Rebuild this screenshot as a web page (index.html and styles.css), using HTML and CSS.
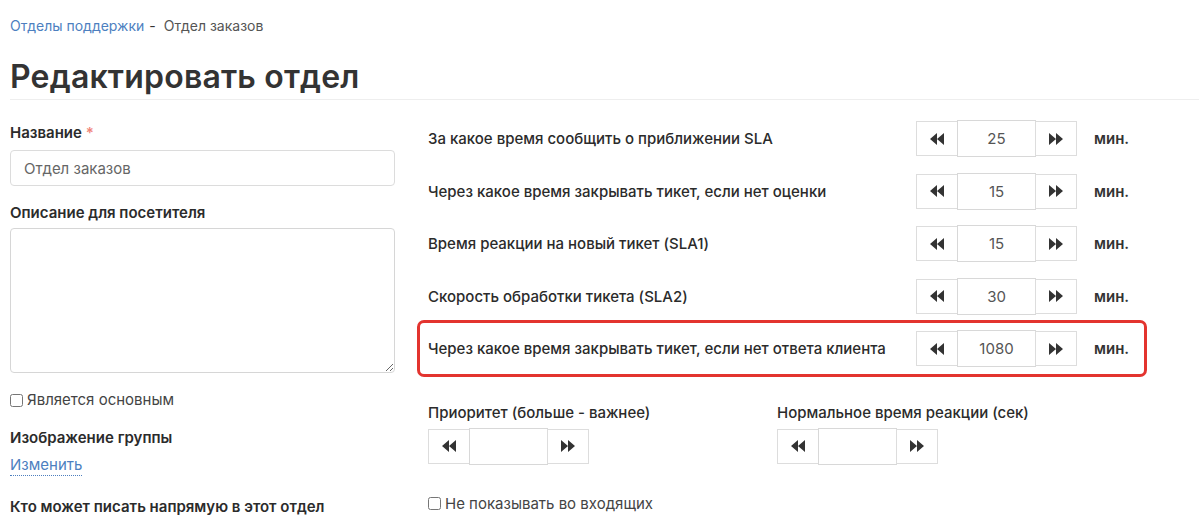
FILE: index.html
```html
<!doctype html>
<html>
<head>
<meta charset="utf-8">
<title>Редактировать отдел</title>
<link rel="stylesheet" href="styles.css">
</head>
<body>
<div class="crumbs"><a href="#">Отделы поддержки</a><span class="sep">-</span><span class="cur">Отдел заказов</span></div>
<h1 class="title">Редактировать отдел</h1>

<div class="form">
  <div class="left">
    <label class="lbl">Название <span class="req">*</span></label>
    <input class="text" value="Отдел заказов">
    <label class="lbl">Описание для посетителя</label>
    <textarea class="area"></textarea>
    <label class="check"><input type="checkbox"> Является основным</label>
    <div class="lbl">Изображение группы</div>
    <a href="#" class="dotted">Изменить</a>
    <div class="lbl">Кто может писать напрямую в этот отдел</div>
  </div>

  <div class="right">
    <div class="row">
      <div class="rlabel">За какое время сообщить о приближении SLA</div>
      <div class="stepper">
        <button class="sbtn"><svg viewBox="0 0 14 12"><path d="M7 0 0 6 7 12ZM14 0 7 6 14 12Z"/></svg></button>
        <input class="sval" value="25">
        <button class="sbtn"><svg viewBox="0 0 14 12"><path d="M0 0 7 6 0 12ZM7 0 14 6 7 12Z"/></svg></button>
      </div>
      <div class="unit">мин.</div>
    </div>
    <div class="row">
      <div class="rlabel">Через какое время закрывать тикет, если нет оценки</div>
      <div class="stepper">
        <button class="sbtn"><svg viewBox="0 0 14 12"><path d="M7 0 0 6 7 12ZM14 0 7 6 14 12Z"/></svg></button>
        <input class="sval" value="15">
        <button class="sbtn"><svg viewBox="0 0 14 12"><path d="M0 0 7 6 0 12ZM7 0 14 6 7 12Z"/></svg></button>
      </div>
      <div class="unit">мин.</div>
    </div>
    <div class="row">
      <div class="rlabel">Время реакции на новый тикет (SLA1)</div>
      <div class="stepper">
        <button class="sbtn"><svg viewBox="0 0 14 12"><path d="M7 0 0 6 7 12ZM14 0 7 6 14 12Z"/></svg></button>
        <input class="sval" value="15">
        <button class="sbtn"><svg viewBox="0 0 14 12"><path d="M0 0 7 6 0 12ZM7 0 14 6 7 12Z"/></svg></button>
      </div>
      <div class="unit">мин.</div>
    </div>
    <div class="row">
      <div class="rlabel">Скорость обработки тикета (SLA2)</div>
      <div class="stepper">
        <button class="sbtn"><svg viewBox="0 0 14 12"><path d="M7 0 0 6 7 12ZM14 0 7 6 14 12Z"/></svg></button>
        <input class="sval" value="30">
        <button class="sbtn"><svg viewBox="0 0 14 12"><path d="M0 0 7 6 0 12ZM7 0 14 6 7 12Z"/></svg></button>
      </div>
      <div class="unit">мин.</div>
    </div>
    <div class="row marked">
      <div class="rlabel">Через какое время закрывать тикет, если нет ответа клиента</div>
      <div class="stepper">
        <button class="sbtn"><svg viewBox="0 0 14 12"><path d="M7 0 0 6 7 12ZM14 0 7 6 14 12Z"/></svg></button>
        <input class="sval" value="1080">
        <button class="sbtn"><svg viewBox="0 0 14 12"><path d="M0 0 7 6 0 12ZM7 0 14 6 7 12Z"/></svg></button>
      </div>
      <div class="unit">мин.</div>
    </div>

    <div class="pair">
      <div class="field">
        <div class="flabel">Приоритет (больше - важнее)</div>
        <div class="stepper">
          <button class="sbtn"><svg viewBox="0 0 14 12"><path d="M7 0 0 6 7 12ZM14 0 7 6 14 12Z"/></svg></button>
          <input class="sval" value="">
          <button class="sbtn"><svg viewBox="0 0 14 12"><path d="M0 0 7 6 0 12ZM7 0 14 6 7 12Z"/></svg></button>
        </div>
      </div>
      <div class="field">
        <div class="flabel">Нормальное время реакции (сек)</div>
        <div class="stepper">
          <button class="sbtn"><svg viewBox="0 0 14 12"><path d="M7 0 0 6 7 12ZM14 0 7 6 14 12Z"/></svg></button>
          <input class="sval" value="">
          <button class="sbtn"><svg viewBox="0 0 14 12"><path d="M0 0 7 6 0 12ZM7 0 14 6 7 12Z"/></svg></button>
        </div>
      </div>
    </div>
    <label class="check inbox"><input type="checkbox"> Не показывать во входящих</label>
  </div>
</div>
</body>
</html>
```

FILE: styles.css
```css
body {
    margin: 0;
    padding: 0 0 0 10px;
    font-family: Inter, "Noto Sans", sans-serif;
    color: #2b2b2b;
    background: #fff;
    overflow: hidden;
}
a {
    color: #4d7fbf;
    text-decoration: none;
}

.crumbs {
    padding-top: 17px;
    height: 20px;
    font-size: 14px;
    line-height: 18px;
}
.crumbs .sep {
    margin: 0 8px 0 5px;
    color: #333;
}
.crumbs .cur {
    color: #555;
}

.title {
    margin: 0;
    padding-top: 20px;
    height: 42px;
    font-size: 32px;
    line-height: 40px;
    font-weight: 600;
    color: #333;
    letter-spacing: 0.2px;
    border-bottom: 1px solid #eee;
}

.form {
    display: flex;
}

.left {
    width: 385px;
    display: flex;
    flex-direction: column;
    align-items: flex-start;
    padding-top: 23px;
}
.lbl {
    display: block;
    font-size: 15px;
    font-weight: 600;
    line-height: 20px;
    color: #2b2b2b;
}
.req {
    color: #f0857a;
}
.text {
    box-sizing: border-box;
    width: 385px;
    height: 36px;
    margin: 7px 0 17px;
    padding: 0 13px;
    border: 1px solid #dcdcdc;
    border-radius: 4px;
    font: 15px Inter, sans-serif;
    color: #666;
}
.area {
    box-sizing: border-box;
    width: 385px;
    height: 145px;
    margin: 5px 0 17px;
    border: 1px solid #d6d6d6;
    border-radius: 4px;
}
.check {
    display: flex;
    align-items: center;
    font-size: 15px;
    line-height: 20px;
    color: #444;
}
.check input {
    margin: 0 4px 0 0;
    width: 13px;
    height: 13px;
}
.left .check {
    margin-bottom: 18px;
}
.dotted {
    margin: 7px 0 21px;
    font-size: 15px;
    line-height: 20px;
    border-bottom: 1px dotted #4d7fbf;
}

.right {
    margin-left: 22px;
    width: 730px;
    padding-top: 10px;
}
.row {
    display: flex;
    align-items: center;
    height: 51px;
    border: 3px solid transparent;
    border-radius: 7px;
    margin-bottom: -4.5px;
}
.row.marked {
    border-color: #e3342f;
}
.rlabel {
    flex: 1;
    padding-left: 8px;
    font-size: 15px;
    font-weight: 500;
    color: #2b2b2b;
}
.unit {
    margin-left: 17px;
    width: 33px;
    margin-right: 17px;
    font-size: 15px;
    font-weight: 600;
    color: #333;
}

.stepper {
    display: flex;
    width: 161px;
    height: 35px;
}
.sbtn {
    width: 42px;
    height: 35px;
    padding: 0;
    border: 1px solid #ddd;
    background: #fff;
    display: flex;
    align-items: center;
    justify-content: center;
}
.sbtn + .sval {
    margin-left: -1px;
}
.sval + .sbtn {
    margin-left: -1px;
}
.sbtn svg {
    width: 14px;
    height: 12px;
    fill: #333;
}
.sval {
    box-sizing: border-box;
    width: 79px;
    height: 37px;
    margin-top: -1px;
    border: 1px solid #d8d8d8;
    text-align: center;
    font: 15px Inter, sans-serif;
    color: #555;
    padding: 0;
}

.pair {
    display: flex;
    padding: 30px 0 0 11px;
}
.field {
    width: 349px;
}
.flabel {
    font-size: 15px;
    font-weight: 500;
    line-height: 20px;
    margin-bottom: 6px;
}
.inbox {
    margin: 30px 0 0 11px;
}
```
